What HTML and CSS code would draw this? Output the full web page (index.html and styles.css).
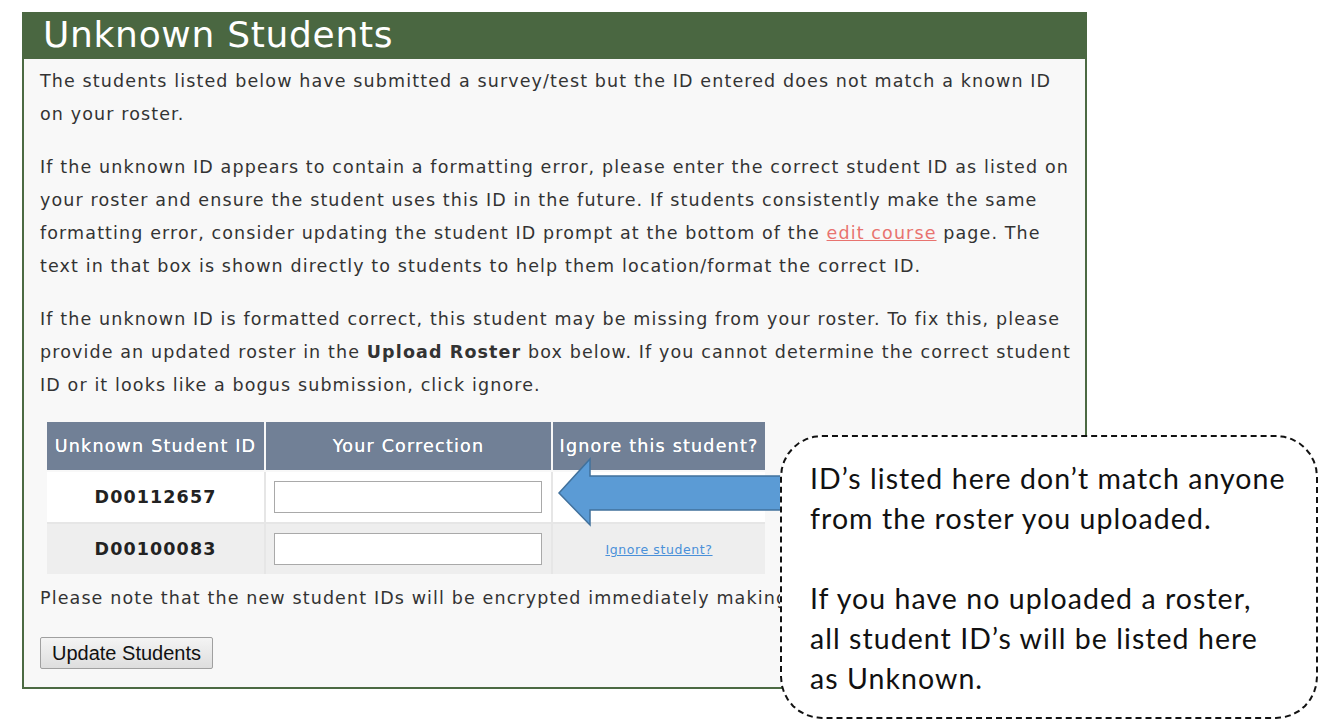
FILE: index.html
```html
<!DOCTYPE html>
<html>
<head>
<meta charset="utf-8">
<link rel="stylesheet" href="styles.css">
</head>
<body>
<div class="stage">
  <div class="panel">
    <div class="panel-head">Unknown Students</div>
    <div class="panel-body">
      <p>The students listed below have submitted a survey/test but the ID entered does not match a known ID<br>on your roster.</p>
      <p>If the unknown ID appears to contain a formatting error, please enter the correct student ID as listed on<br>your roster and ensure the student uses this ID in the future. If students consistently make the same<br>formatting error, consider updating the student ID prompt at the bottom of the <a class="edit-link" href="#">edit course</a> page. The<br>text in that box is shown directly to students to help them location/format the correct ID.</p>
      <p>If the unknown ID is formatted correct, this student may be missing from your roster. To fix this, please<br>provide an updated roster in the <b>Upload Roster</b> box below. If you cannot determine the correct student<br>ID or it looks like a bogus submission, click ignore.</p>
      <table class="ids">
        <thead>
          <tr><th class="c1">Unknown Student ID</th><th class="c2">Your Correction</th><th class="c3">Ignore this student?</th></tr>
        </thead>
        <tbody>
          <tr class="odd"><td class="sid">D00112657</td><td class="inp"><input type="text"></td><td class="ign"><a href="#">Ignore student?</a></td></tr>
          <tr class="even"><td class="sid">D00100083</td><td class="inp"><input type="text"></td><td class="ign"><a href="#">Ignore student?</a></td></tr>
        </tbody>
      </table>
      <p class="note">Please note that the new student IDs will be encrypted immediately making them unrecoverable.</p>
      <button class="update">Update Students</button>
    </div>
  </div>

  <svg class="arrow" width="230" height="70" viewBox="0 0 230 70">
    <polygon points="2,36 33,2 33,19 228,19 228,53 33,53 33,68" fill="#5b9bd5" stroke="#41719c" stroke-width="1.5"/>
  </svg>

  <div class="callout">
    <p>ID’s listed here don’t match anyone from the roster you uploaded.</p>
    <p class="gap">If you have no uploaded a roster,<br>all student ID’s will be listed here<br>as Unknown.</p>
  </div>
</div>
</body>
</html>
```

FILE: styles.css
```css
html, body {
  margin: 0;
  padding: 0;
  background: #ffffff;
}
.stage {
  position: relative;
  width: 1319px;
  height: 721px;
  overflow: hidden;
  padding-top: 12px;
  box-sizing: border-box;
}
.panel {
  margin-left: 22px;
  width: 1065px;
  height: 677px;
  box-sizing: border-box;
  border: 2px solid #4c6a43;
  border-top: 0;
  background: #f8f8f8;
  font-family: "DejaVu Sans", Verdana, sans-serif;
  color: #333333;
}
.panel-head {
  background: #4a6741;
  color: #ffffff;
  height: 47px;
  line-height: 46px;
  font-size: 36px;
  letter-spacing: 0.7px;
  padding-left: 21px;
  margin: 0 -2px;
}
.panel-body {
  padding: 6px 14px 0 16px;
  font-size: 17.5px;
  letter-spacing: 1.12px;
  line-height: 33px;
}
.panel-body p {
  margin: 0 0 20px 0;
  white-space: nowrap;
}
.edit-link {
  color: #e8736f;
  text-decoration: underline;
}
table.ids {
  margin: 20px 0 0 7px;
  border-collapse: collapse;
  width: 718px;
}
table.ids th {
  background: #718096;
  color: #ffffff;
  font-weight: normal;
  font-size: 17.5px;
  letter-spacing: 1.2px;
  height: 48px;
  padding: 0;
  border: 2px solid #f8f8f8;
  border-top: 0;
  text-align: center;
  white-space: nowrap;
  text-shadow: 0 0 0.4px #ffffff;
}
table.ids th.c1 { width: 217px; border-left: 0; }
table.ids th.c2 { width: 285px; }
table.ids th.c3 { border-right: 0; }
table.ids td {
  height: 50px;
  padding: 0;
  border: 2px solid #e6e6e6;
  text-align: center;
}
table.ids tr td:first-child { border-left: 0; }
table.ids tr td:last-child { border-right: 0; }
table.ids tbody tr:last-child td { border-bottom: 0; }
tr.odd td { background: #ffffff; }
tr.even td { background: #eeeeee; }
td.sid {
  font-weight: 700;
  font-size: 17.5px;
  color: #222222;
}
td.inp input {
  width: 268px;
  height: 32px;
  box-sizing: border-box;
  border: 1px solid #a9a9a9;
  background: #ffffff;
  display: block;
  margin-left: 8px;
}
td.ign a {
  font-size: 12.5px;
  letter-spacing: 0.6px;
  color: #4a90d9;
  text-decoration: underline;
}
p.note {
  margin: 8px 0 0 0 !important;
}
button.update {
  margin-top: 22px;
  font-family: "Liberation Sans", Arial, sans-serif;
  font-size: 20px;
  letter-spacing: 0;
  color: #111111;
  height: 32px;
  padding: 0 11px;
  background: linear-gradient(#f4f4f4, #dedede);
  border: 1px solid #a0a0a0;
  border-radius: 2px;
}
.arrow {
  position: absolute;
  left: 557px;
  top: 457px;
}
.callout {
  position: absolute;
  left: 780px;
  top: 435px;
  width: 538px;
  height: 284px;
  box-sizing: border-box;
  border: 2px dashed #111111;
  border-radius: 42px;
  background: #ffffff;
  padding: 21px 10px 0 28px;
  font-family: "Lato", "Open Sans", sans-serif;
  font-size: 28.5px;
  letter-spacing: 1.05px;
  line-height: 40px;
  color: #111111;
}
.callout p {
  margin: 0;
}
.callout p.gap {
  margin-top: 40px;
}
```
